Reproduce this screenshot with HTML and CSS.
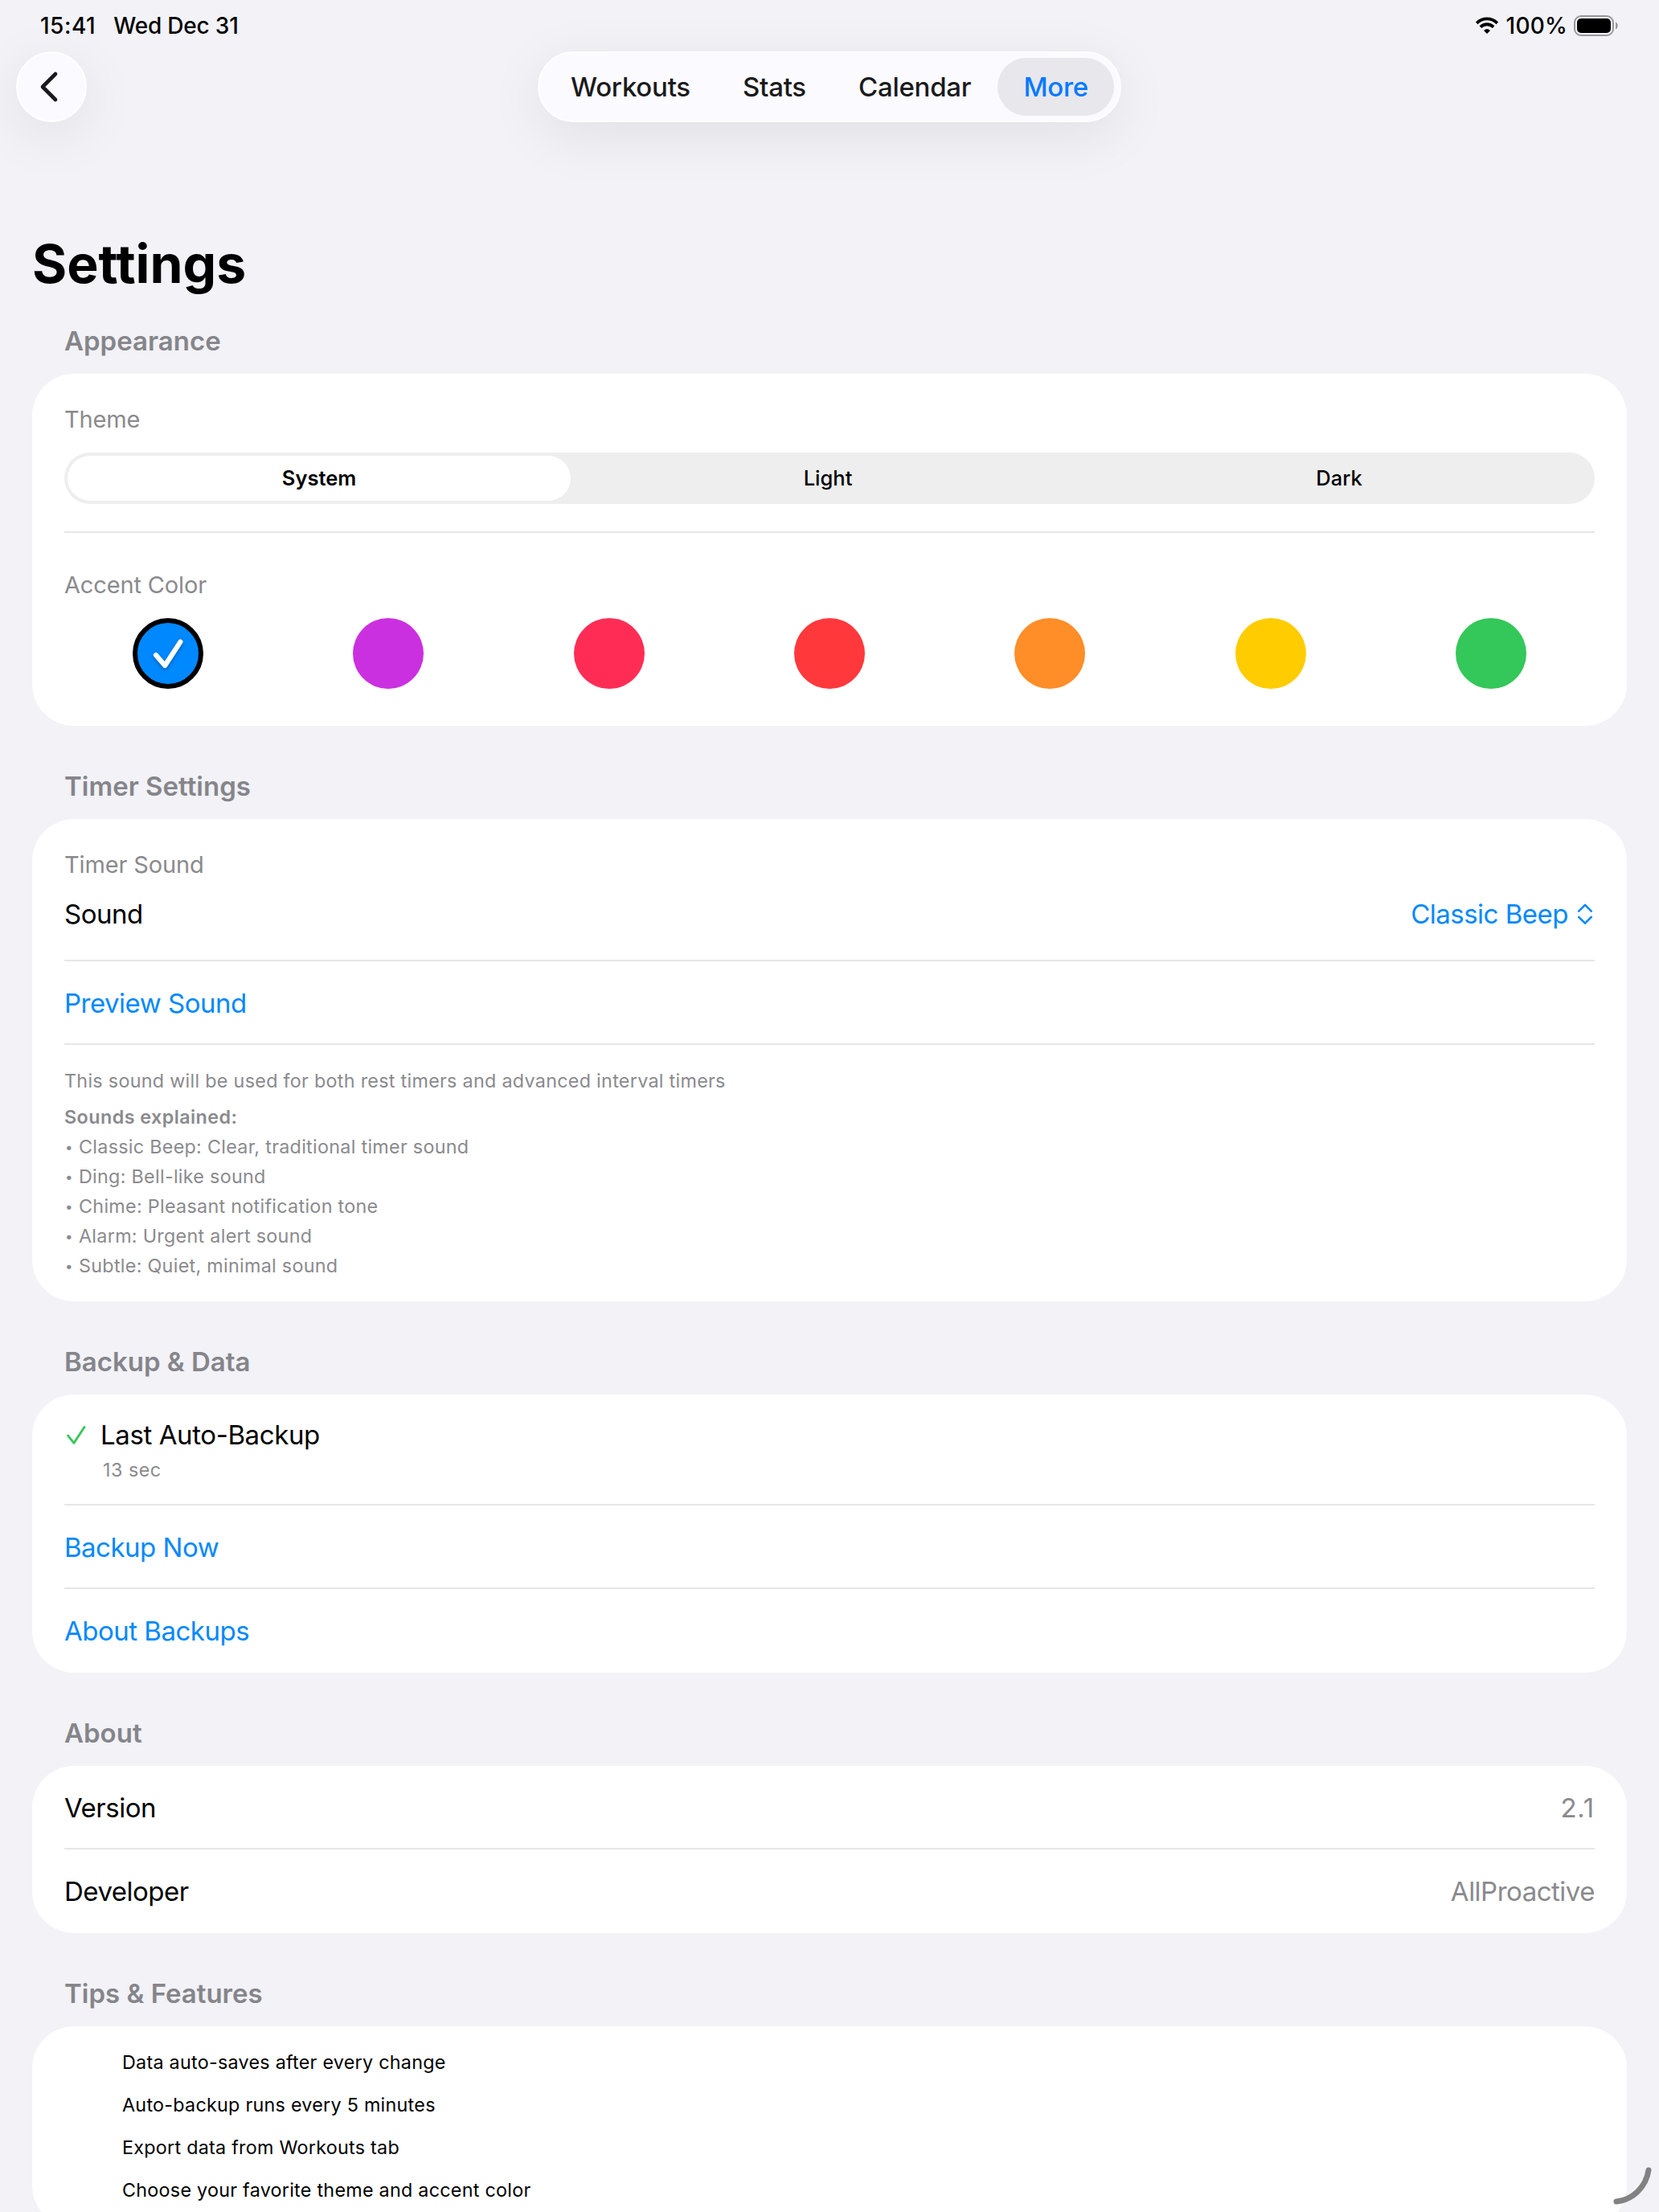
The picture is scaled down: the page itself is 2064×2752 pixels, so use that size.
FILE: index.html
```html
<!DOCTYPE html>
<html lang="en">
<head>
  <meta charset="UTF-8">
  <title>Settings</title>
  <link rel="stylesheet" href="styles.css">
</head>
<body>

  <div class="status-bar">
    <div class="status-left">
      <span class="time">15:41</span>
      <span class="date">Wed Dec 31</span>
    </div>
    <div class="status-right">
      <svg class="wifi" width="30" height="22" viewBox="0 0 30 22">
        <path d="M2.2 7.8 C9.4 0.6 20.6 0.6 27.8 7.8" fill="none" stroke="#000" stroke-width="3.8" stroke-linecap="butt"/>
        <path d="M6.9 12.6 C11.5 8.1 18.5 8.1 23.1 12.6" fill="none" stroke="#000" stroke-width="3.8" stroke-linecap="butt"/>
        <path d="M11 17 C13.2 14.8 16.8 14.8 19 17 L15 21 Z" fill="#000"/>
      </svg>
      <span class="percent">100%</span>
      <svg class="battery" width="56" height="26" viewBox="0 0 56 26">
        <rect x="1" y="1" width="48" height="24" rx="8" fill="none" stroke="#98989b" stroke-width="2"/>
        <rect x="4" y="4" width="42" height="18" rx="5" fill="#000"/>
        <path d="M52 8.5 C55.6 10 55.6 16 52 17.5 Z" fill="#98989b"/>
      </svg>
    </div>
  </div>

  <header class="nav-row">
    <button class="back">
      <svg width="24" height="40" viewBox="0 0 24 40">
        <path d="M20 4 L4 20 L20 36" fill="none" stroke="#1a1a1c" stroke-width="4.6" stroke-linecap="round" stroke-linejoin="round"/>
      </svg>
    </button>
    <nav class="tabs">
      <a class="tab">Workouts</a>
      <a class="tab">Stats</a>
      <a class="tab">Calendar</a>
      <a class="tab active">More</a>
    </nav>
  </header>

  <main>
    <h1>Settings</h1>

    <h2>Appearance</h2>
    <section class="card">
      <div class="block theme">
        <div class="label">Theme</div>
        <div class="segmented">
          <div class="segment selected">System</div>
          <div class="segment">Light</div>
          <div class="segment">Dark</div>
        </div>
      </div>
      <div class="block accent">
        <div class="label">Accent Color</div>
        <div class="swatches">
          <div class="swatch blue">
            <svg width="44" height="44" viewBox="0 0 44 44">
              <path d="M7 24 L18.2 37 L37.4 7.6" fill="none" stroke="#fff" stroke-width="6.2" stroke-linecap="round" stroke-linejoin="round"/>
            </svg>
          </div>
          <div class="swatch purple"></div>
          <div class="swatch pink"></div>
          <div class="swatch red"></div>
          <div class="swatch orange"></div>
          <div class="swatch yellow"></div>
          <div class="swatch green"></div>
        </div>
      </div>
    </section>

    <h2>Timer Settings</h2>
    <section class="card">
      <div class="block sound">
        <div class="label">Timer Sound</div>
        <div class="sound-row">
          <span>Sound</span>
          <span class="picker">
            Classic Beep
            <svg width="22" height="30" viewBox="0 0 22 30">
              <path d="M3.2 11.6 L11 3.8 L18.8 11.6 M3.2 18.8 L11 26.6 L18.8 18.8" fill="none" stroke="#0088ff" stroke-width="2.6" stroke-linecap="round" stroke-linejoin="round"/>
            </svg>
          </span>
        </div>
      </div>
      <div class="row link">Preview Sound</div>
      <div class="block notes">
        <p class="intro">This sound will be used for both rest timers and advanced interval timers</p>
        <p class="bold">Sounds explained:</p>
        <p><span class="dot">•</span>Classic Beep: Clear, traditional timer sound</p>
        <p><span class="dot">•</span>Ding: Bell-like sound</p>
        <p><span class="dot">•</span>Chime: Pleasant notification tone</p>
        <p><span class="dot">•</span>Alarm: Urgent alert sound</p>
        <p><span class="dot">•</span>Subtle: Quiet, minimal sound</p>
      </div>
    </section>

    <h2>Backup &amp; Data</h2>
    <section class="card">
      <div class="block backup">
        <div class="backup-title">
          <svg width="28" height="28" viewBox="0 0 28 28">
            <path d="M4.6 15.2 L12 24.3 L25 4.4" fill="none" stroke="#34c759" stroke-width="2.8" stroke-linecap="round" stroke-linejoin="round"/>
          </svg>
          <span class="backup-name">Last Auto-Backup</span>
        </div>
        <div class="backup-time">13 sec</div>
      </div>
      <div class="row link">Backup Now</div>
      <div class="row link">About Backups</div>
    </section>

    <h2>About</h2>
    <section class="card">
      <div class="row"><span>Version</span><span class="value version">2.1</span></div>
      <div class="row"><span>Developer</span><span class="value">AllProactive</span></div>
    </section>

    <h2>Tips &amp; Features</h2>
    <section class="card tips">
      <p>Data auto-saves after every change</p>
      <p>Auto-backup runs every 5 minutes</p>
      <p>Export data from Workouts tab</p>
      <p>Choose your favorite theme and accent color</p>
    </section>
  </main>

  <svg class="corner" width="56" height="56" viewBox="0 0 56 56">
    <path d="M47 4 C44 24 28 41 7 43" fill="none" stroke="#828282" stroke-width="7" stroke-linecap="round"/>
  </svg>

</body>
</html>
```

FILE: styles.css
```css
* {
  box-sizing: border-box;
}

body {
  margin: 0;
  height: 2752px;
  overflow: hidden;
  background: #f2f2f7;
  color: #000;
  font-family: Inter, "Liberation Sans", sans-serif;
  font-size: 33px;
  line-height: 42px;
  letter-spacing: -0.5px;
}

p {
  margin: 0;
}

.status-bar {
  height: 64px;
  padding: 0 50px;
  display: flex;
  justify-content: space-between;
  align-items: center;
  font-size: 28px;
  font-weight: 500;
}

.status-left {
  display: flex;
  gap: 22px;
}

.time {
  letter-spacing: 0.5px;
}

.date {
  letter-spacing: -0.2px;
}

.status-right {
  display: flex;
  align-items: center;
}

.percent {
  margin: 0 8px 0 9px;
  letter-spacing: 0.2px;
}

.nav-row {
  display: grid;
  grid-template-columns: 1fr auto 1fr;
  padding: 0 20px;
}

.back {
  width: 88px;
  height: 88px;
  padding: 0 6px 0 0;
  display: flex;
  align-items: center;
  justify-content: center;
  border: 2px solid #fff;
  border-radius: 50%;
  background: #fbfaff;
  box-shadow: 0 16px 70px rgba(0, 0, 0, 0.08);
}

.tabs {
  width: 726px;
  height: 88px;
  padding: 6px 7px;
  display: flex;
  justify-content: space-between;
  border: 2px solid #fff;
  border-radius: 44px;
  background: #fbfaff;
  box-shadow: 0 16px 70px rgba(0, 0, 0, 0.08);
}

.tab {
  display: flex;
  align-items: center;
  padding: 0 32px;
  border-radius: 36px;
  color: #1a1a1c;
  font-weight: 500;
  letter-spacing: -0.25px;
}

.tab.active {
  background: #e8e7ec;
  color: #007aff;
}

main {
  padding: 0 40px;
}

h1 {
  margin: 136px 0 -19px;
  font-size: 66px;
  line-height: 80px;
  font-weight: 700;
  letter-spacing: 0;
}

h2 {
  margin: 54px 40px 20px;
  font-size: 33px;
  line-height: 42px;
  font-weight: 600;
  letter-spacing: 0;
  color: #85858a;
}

.card {
  padding: 0 40px;
  border-radius: 52px;
  background: #fff;
}

/* the separator is drawn inside the row, like a list cell */
.row,
.block {
  box-shadow: inset 0 -2px #e6e6e6;
}

.row:last-child,
.block:last-child {
  box-shadow: none;
}

.row {
  height: 104px;
  display: flex;
  justify-content: space-between;
  align-items: center;
}

.link,
.picker {
  color: #0088ff;
}

.value {
  color: #8a8a8e;
}

.version {
  letter-spacing: 0.8px;
}

.label {
  font-size: 29px;
  line-height: 36px;
  letter-spacing: -0.15px;
  color: #8a8a8e;
}

.theme {
  padding: 39px 0 36px;
}

.segmented {
  height: 64px;
  margin-top: 23px;
  padding: 4px 0 4px 4px;
  display: grid;
  grid-template-columns: 628px 1fr 1fr;
  border-radius: 32px;
  background: #eeeeee;
  font-size: 25.5px;
  font-weight: 500;
  letter-spacing: 0;
}

.segment {
  display: flex;
  align-items: center;
  justify-content: center;
}

.segment.selected {
  margin-right: 2px;
  border-radius: 28px;
  background: #fff;
  font-weight: 600;
}

.accent {
  padding: 47px 0 46px;
}

.swatches {
  margin-top: 23px;
  display: grid;
  grid-template-columns: repeat(7, 1fr);
  gap: 16px;
  justify-items: center;
}

.swatch {
  width: 88px;
  height: 88px;
  display: flex;
  align-items: center;
  justify-content: center;
  border-radius: 50%;
}

.swatch svg {
  filter: drop-shadow(0 2px 2px rgba(0, 0, 0, 0.3));
}

.blue {
  border: 6px solid #000;
  background: #0088ff;
}

.purple {
  background: #cb30e0;
}

.pink {
  background: #ff2d55;
}

.red {
  background: #ff383c;
}

.orange {
  background: #ff8d28;
}

.yellow {
  background: #ffcc00;
}

.green {
  background: #34c759;
}

.sound {
  padding: 39px 0 38px;
}

.sound-row {
  margin-top: 22px;
  display: flex;
  justify-content: space-between;
}

.picker {
  display: flex;
  align-items: center;
  gap: 10px;
  margin-right: 1px;
}

.notes {
  padding: 26px 0;
  font-size: 23.3px;
  line-height: 37px;
  letter-spacing: 0.3px;
  color: #8a8a8e;
}

.intro {
  margin-bottom: 8px;
}

.bold {
  font-weight: 600;
  letter-spacing: 0.45px;
}

.dot {
  display: inline-block;
  width: 18px;
  padding-left: 1px;
  font-size: 17px;
  line-height: 1;
  vertical-align: 2px;
}

.backup {
  padding: 29px 0 28px;
}

.backup-title {
  display: flex;
  align-items: center;
  gap: 17px;
}

.backup-name {
  letter-spacing: -0.4px;
}

.backup-time {
  margin-top: 7px;
  padding-left: 48px;
  font-size: 23.3px;
  line-height: 32px;
  letter-spacing: 0.5px;
  color: #8a8a8e;
}

.tips {
  padding: 18px 112px 20px;
  font-size: 23.3px;
  line-height: 53px;
  letter-spacing: 0.27px;
}

.corner {
  position: absolute;
  left: 2004px;
  top: 2696px;
}
```
